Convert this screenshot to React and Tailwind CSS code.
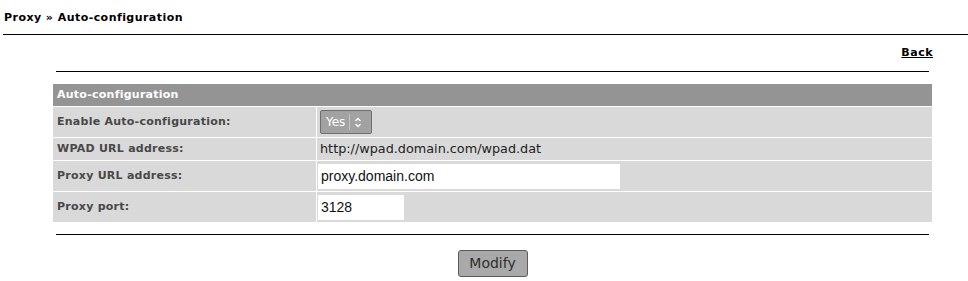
import React from "react";

const rows = [
  { label: "Enable Auto-configuration:", kind: "select", h: "h-[30px]" },
  { label: "WPAD URL address:", kind: "text", value: "http://wpad.domain.com/wpad.dat", h: "h-[22px]" },
  { label: "Proxy URL address:", kind: "input", value: "proxy.domain.com", w: "w-[302px]", h: "h-[30px]" },
  { label: "Proxy port:", kind: "input", value: "3128", w: "w-[86px]", h: "h-[30px]" },
];

const UpDown = () => (
  <svg width="8" height="11" viewBox="0 0 8 11" fill="none" stroke="white" strokeWidth="1.3">
    <path d="M1.5 4 L4 1.5 L6.5 4" />
    <path d="M1.5 7 L4 9.5 L6.5 7" />
  </svg>
);

const App = () => {
  return (
    <div className="w-[968px] h-[281px] bg-white font-['DejaVu_Sans',sans-serif]">
      {/* Breadcrumb */}
      <div className="h-[34px] flex items-center pl-[4px] pt-[3px] text-[11px] font-bold tracking-[0.45px] text-black">
        Proxy » Auto-configuration
      </div>
      <div className="ml-[3px] border-t border-black"></div>

      {/* Back link */}
      <div className="h-[36px] flex items-center justify-end pr-[35px]">
        <a href="#" className="text-[11px] font-bold tracking-[0.5px] text-black underline">
          Back
        </a>
      </div>
      <div className="ml-[56px] mr-[39px] border-t border-black"></div>

      {/* Settings table */}
      <div className="mt-[12px] ml-[53px] w-[879px] flex flex-col gap-[1px]">
        <div className="h-[22px] bg-[#949494] flex items-center pl-[4px] text-[11px] font-bold tracking-[0.25px] text-white">
          Auto-configuration
        </div>
        {rows.map((row) => (
          <div key={row.label} className={`flex gap-[1px] ${row.h}`}>
            <div className="w-[263px] bg-[#d9d9d9] flex items-center pl-[4px] text-[11px] font-bold tracking-[0.25px] text-[#484848]">
              {row.label}
            </div>
            <div className="flex-1 bg-[#d9d9d9] flex items-center pl-[1px]">
              {row.kind === "select" && (
                <div className="ml-[2px] w-[52px] h-[24px] bg-[#a2a2a2] border border-[#6f6f6f] rounded-[2px] flex items-center text-[12px] text-white">
                  <span className="pl-[5px] pr-[4px]">Yes</span>
                  <span className="h-[16px] border-l border-[#c4c4c4]"></span>
                  <span className="pl-[4px] flex items-center">
                    <UpDown />
                  </span>
                </div>
              )}
              {row.kind === "text" && (
                <span className="pl-[2px] text-[12.8px] text-[#222]">
                  {row.value}
                </span>
              )}
              {row.kind === "input" && (
                <input
                  type="text"
                  defaultValue={row.value}
                  className={`${row.w} h-[25px] bg-white pl-[3px] text-[14px] text-[#111] font-['Liberation_Sans',sans-serif] outline-none`}
                />
              )}
            </div>
          </div>
        ))}
      </div>

      <div className="mt-[12px] ml-[56px] mr-[39px] border-t border-black"></div>

      {/* Submit */}
      <div className="mt-[15px] flex justify-center">
        <button className="ml-[17px] w-[70px] h-[27px] bg-[#a9a9a9] border border-[#5a5a5a] rounded-[3px] text-[14px] text-[#2f2f2f]">
          Modify
        </button>
      </div>
    </div>
  );
};

export default App;
